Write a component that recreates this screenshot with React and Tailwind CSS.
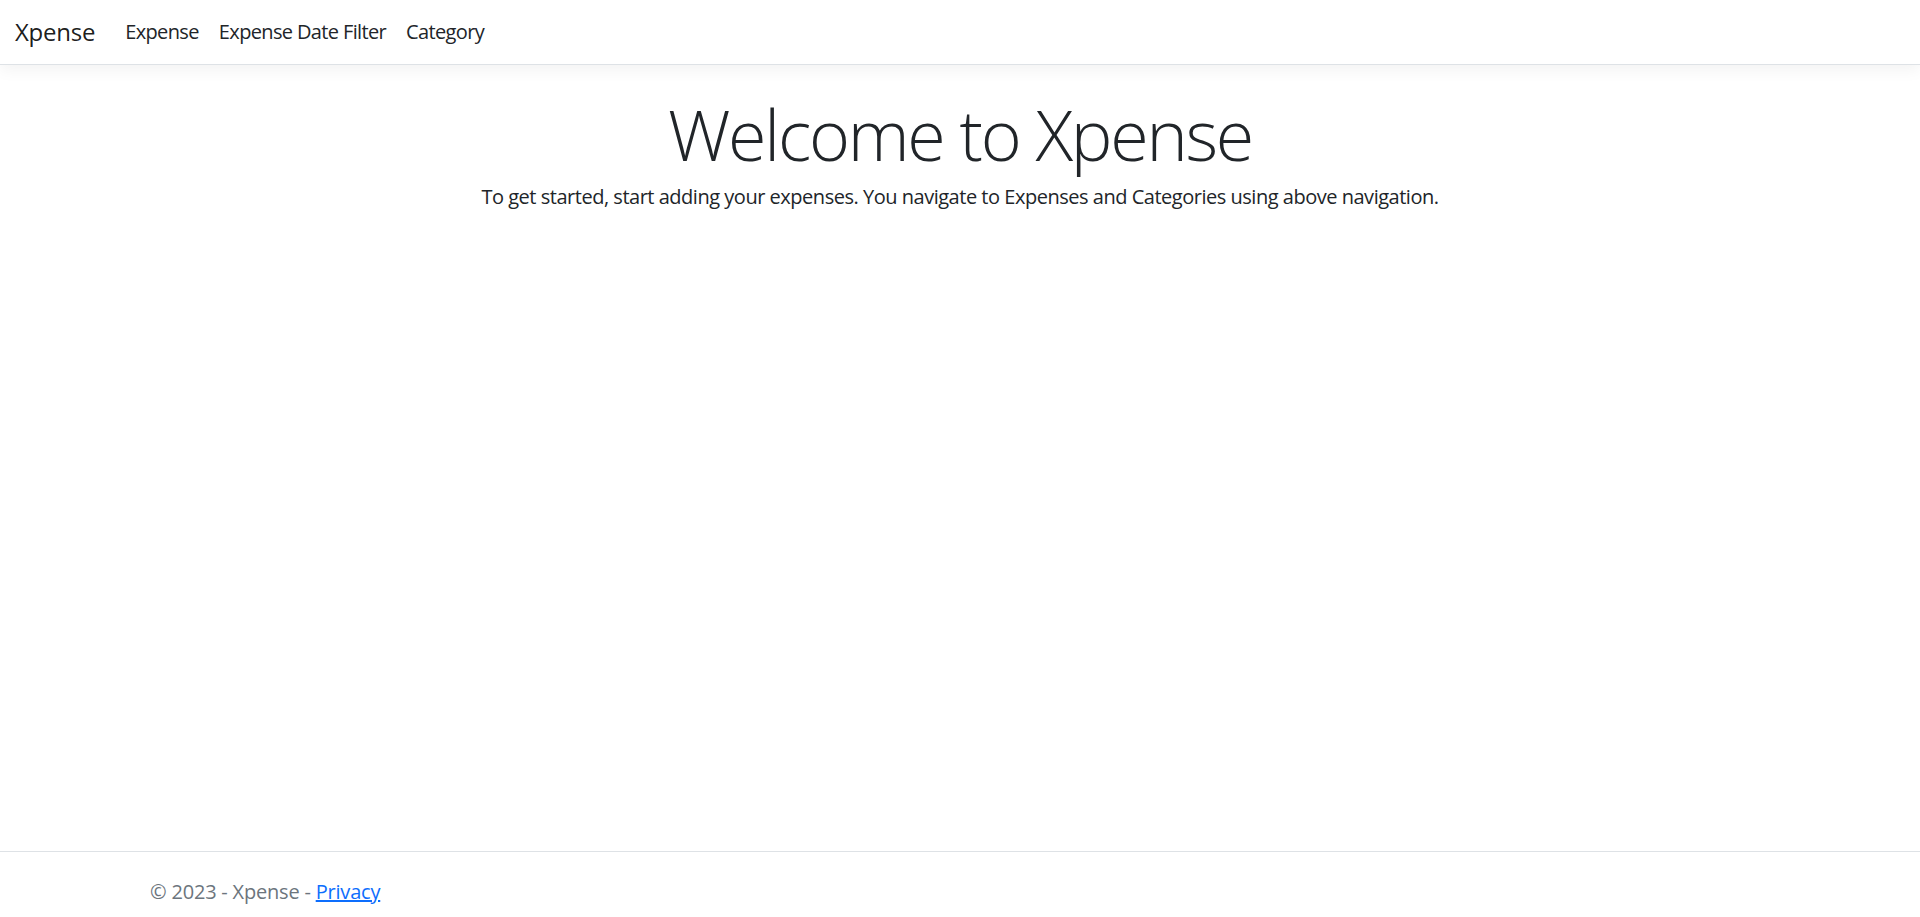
export default function App() {
  const font = { fontFamily: '"Open Sans", "Noto Sans", sans-serif' };
  return (
    <div className="h-screen flex flex-col bg-white text-[#212529] overflow-hidden tracking-[-0.03em]" style={font}>
      {/* Navbar */}
      <header className="h-[65px] shrink-0 border-b border-[#dee2e6] shadow-[0_5px_15px_rgba(0,0,0,0.05)] bg-white flex items-center px-[15px]">
        <a href="#" className="text-[24px] text-black/90 mr-[20px] leading-none tracking-[-0.01em]">Xpense</a>
        <nav className="flex items-center tracking-[-0.04em]">
          <a href="#" className="px-[10px] text-[20px] text-[#212529]">Expense</a>
          <a href="#" className="px-[10px] text-[20px] text-[#212529]">Expense Date Filter</a>
          <a href="#" className="px-[10px] text-[20px] text-[#212529]">Category</a>
        </nav>
      </header>

      {/* Main */}
      <main className="flex-1 pt-[27px]">
        <div className="max-w-[1650px] mx-auto px-[15px] text-center">
          <h1 className="text-[70px] font-light leading-[1.2] mb-[6px] tracking-[-0.032em]">Welcome to Xpense</h1>
          <p className="text-[20px] leading-[1.5]">
            To get started, start adding your expenses. You navigate to Expenses and Categories using above navigation.
          </p>
        </div>
      </main>

      {/* Footer */}
      <footer className="h-[66px] shrink-0 border-t border-[#dee2e6] overflow-hidden">
        <div className="max-w-[1650px] mx-auto px-[15px] text-[20px] leading-[79px] text-[#6c757d] whitespace-nowrap tracking-[-0.01em]">
          © 2023 - Xpense - <a href="#" className="text-[#0d6efd] underline">Privacy</a>
        </div>
      </footer>
    </div>
  );
}
